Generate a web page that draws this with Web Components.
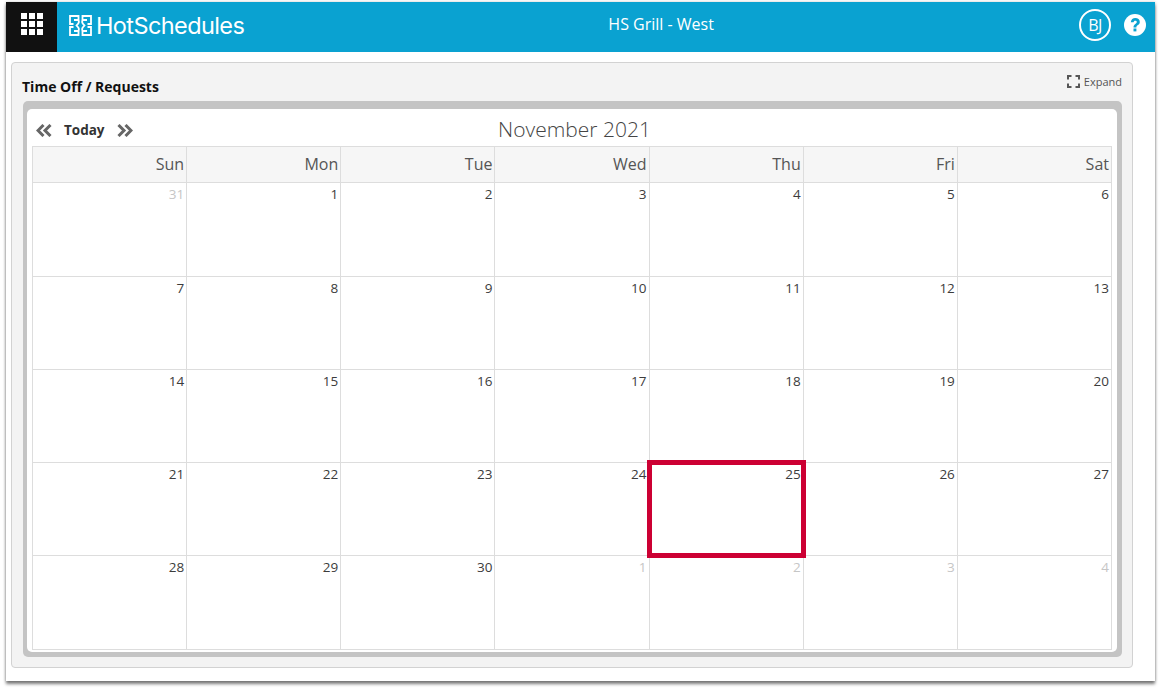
<!DOCTYPE html>
<html>
<head>
<meta charset="utf-8">
<style>
html, body { margin: 0; height: 100%; background: #fff; font-family: "Open Sans", sans-serif; }
body { padding: 2px 6px 10px 6px; box-sizing: border-box; height: 691px; overflow: hidden; }
</style>
</head>
<body>
<hs-app>
  <hs-header slot="header" location="HS Grill - West" initials="BJ"></hs-header>
  <hs-panel title="Time Off / Requests">
    <hs-calendar month="November 2021"></hs-calendar>
  </hs-panel>
</hs-app>

<script>
class HsApp extends HTMLElement {
  constructor() {
    super();
    this.attachShadow({mode: 'open'}).innerHTML = `
      <style>
      :host { display: flex; flex-direction: column; width: 1149px; height: 679px; background: #fff;
        box-shadow: 0 3px 3px 0 rgba(0,0,0,.5), 0 0 3px rgba(0,0,0,.2); }
      .content { flex: 1; padding: 10px 22px 13px 5px; display: flex; min-height: 0; }
      </style>
      <slot name="header"></slot>
      <div class="content"><slot></slot></div>`;
  }
}

class HsHeader extends HTMLElement {
  constructor() {
    super();
    this.attachShadow({mode: 'open'}).innerHTML = `
      <style>
      :host { display: flex; align-items: center; height: 50px; padding-bottom: 4px; box-sizing: border-box; background: #0aa2d1; color: #fff; }
      .apps { align-self: flex-start; width: 51px; height: 50px; padding-bottom: 6px; box-sizing: border-box; background: #111; display: grid; grid-template-columns: repeat(3, 6px);
        grid-auto-rows: 6px; gap: 2px; place-content: center; }
      .apps i { background: #fff; }
      .logo { display: flex; align-items: center; gap: 4px; margin-left: 12px; font: 400 23.5px Inter, "Open Sans", sans-serif; letter-spacing: -.6px; }
      .location { flex: 1; text-align: center; font-size: 16px; margin: 0 12px 2px 11px; }
      .user { width: 32px; height: 32px; border: 2px solid #fff; border-radius: 50%; box-sizing: border-box;
        display: flex; align-items: center; justify-content: center; font-size: 16px; letter-spacing: -.5px; }
      .help { margin: 0 9px 0 13px; width: 22px; height: 22px; display: block; }
      </style>
      <div class="apps"><i></i><i></i><i></i><i></i><i></i><i></i><i></i><i></i><i></i></div>
      <div class="logo">
        <svg width="23" height="21" viewBox="0 0 23 21" fill="none" stroke="#fff" stroke-width="1.800">
          <path d="M9.500 5.500V1H1V9H4.500M13.500 5.500V1H22V9H18.500M9.500 15.500V20H1V12H4.500M13.500 15.500V20H22V12H18.500"/>
          <path d="M5 5H8.500C10 5 10.500 7.500 9 8.800L7.500 10.500L9 12.200C10.500 13.500 10 16 8.500 16H5M18 5H14.500C13 5 12.500 7.500 14 8.800L15.500 10.500L14 12.200C12.500 13.500 13 16 14.500 16H18"/>
        </svg>
        <span>HotSchedules</span>
      </div>
      <div class="location">${this.getAttribute('location')}</div>
      <div class="user">${this.getAttribute('initials')}</div>
      <svg class="help" viewBox="0 0 22 22">
        <circle cx="11" cy="11" r="11" fill="#fff"/>
        <path d="M6.800 8.300C7 5.500 8.900 4 11.300 4C13.900 4 15.800 5.600 15.800 7.900C15.800 9.600 14.800 10.500 13.600 11.300C12.600 12 12.400 12.300 12.400 13.400H9.500C9.500 11.600 10.100 10.800 11.300 9.900C12.200 9.300 12.800 8.900 12.800 8.100C12.800 7.300 12.200 6.800 11.200 6.800C10.200 6.800 9.700 7.400 9.600 8.300Z" fill="#0aa2d1"/>
        <rect x="9.500" y="14.500" width="2.900" height="2.900" fill="#0aa2d1"/>
      </svg>`;
  }
}

class HsPanel extends HTMLElement {
  constructor() {
    super();
    this.attachShadow({mode: 'open'}).innerHTML = `
      <style>
      :host { display: flex; flex-direction: column; flex: 1; min-width: 0; box-sizing: border-box; background: #f3f3f3;
        border: 1px solid #d2d2d2; border-radius: 4px; padding: 0 10px 10px 11px; }
      .head { display: flex; justify-content: space-between; height: 38px; }
      h2 { margin: 14px 0 0 -1px; font-size: 14px; font-weight: 700; color: #111; line-height: 19px; }
      .expand { display: flex; align-items: center; gap: 4px; height: 14px; margin-top: 11px; font-size: 11px; color: #555; }
      .expand svg { display: block; }
      .well { flex: 1; display: flex; min-height: 0; background: #c4c4c4; border-radius: 5px; padding: 8px 5px 5px 4px; }
      </style>
      <div class="head">
        <h2>${this.getAttribute('title')}</h2>
        <div class="expand">
          <svg width="13" height="13" viewBox="0 0 13 13" fill="none" stroke="#555" stroke-width="2">
            <path d="M1 4.500V1H4.500M8.500 1H12V4.500M1 8.500V12H4.500M8.500 12H12V8.500"/>
          </svg>
          <span>Expand</span>
        </div>
      </div>
      <div class="well"><slot></slot></div>`;
  }
}

class HsCalendar extends HTMLElement {
  constructor() {
    super();
    const days = ['Sun', 'Mon', 'Tue', 'Wed', 'Thu', 'Fri', 'Sat'];
    const cells = [31, ...Array.from({length: 30}, (_, i) => i + 1), 1, 2, 3, 4];
    const head = days.map(d => `<div class="dow">${d}</div>`).join('');
    const body = cells.map((n, i) => {
      const muted = i === 0 || i > 30 ? ' muted' : '';
      const mark = n === 25 ? '<div class="mark"></div>' : '';
      return `<div class="day${muted}">${n}${mark}</div>`;
    }).join('');
    this.attachShadow({mode: 'open'}).innerHTML = `
      <style>
      :host { display: flex; flex-direction: column; flex: 1; min-width: 0; background: #fff; border-radius: 5px; padding: 0 5px 2px 5px; }
      .bar { position: relative; display: flex; align-items: center; height: 38px; box-sizing: border-box; padding-top: 4px; flex: none; color: #333; margin-bottom: -1px; }
      .nav { display: flex; align-items: center; gap: 12px; margin-left: 4px; font-size: 13.500px; font-weight: 700; }
      .nav svg { display: block; }
      .title { position: absolute; left: 5px; right: 0; top: 6px; text-align: center; font-size: 21px; font-weight: 300; color: #444; line-height: 28px; }
      .grid { flex: 1; display: grid; grid-template-columns: repeat(7, 1fr); grid-template-rows: 36px 94px 93px 93px 93px 1fr;
        border-top: 1px solid #ddd; border-left: 1px solid #ddd; min-height: 0; }
      .dow, .day { border: solid #ddd; border-width: 0 1px 1px 0; }
      .dow { background: #f6f6f6; text-align: right; font-size: 16px; color: #555; padding: 6px 2px 0 0; line-height: 22px; }
      .day { position: relative; text-align: right; font-size: 13.500px; color: #3c3c3c; padding: 2px 2px 0 0; line-height: 19px; }
      .muted { color: #c6c6c6; }
      .mark { position: absolute; z-index: 1; inset: -3px; border: 5px solid #cc0033; }
      </style>
      <div class="bar">
        <div class="nav">
          <svg width="16" height="13" viewBox="0 0 16 13" fill="none" stroke="#666" stroke-width="3"><path d="M7.500 1L2 6.500L7.500 12M14.500 1L9 6.500L14.500 12"/></svg>
          <span>Today</span>
          <svg width="16" height="13" viewBox="0 0 16 13" fill="none" stroke="#666" stroke-width="3"><path d="M1.500 1L7 6.500L1.500 12M8.500 1L14 6.500L8.500 12"/></svg>
        </div>
        <div class="title">${this.getAttribute('month')}</div>
      </div>
      <div class="grid">${head}${body}</div>`;
  }
}

customElements.define('hs-app', HsApp);
customElements.define('hs-header', HsHeader);
customElements.define('hs-panel', HsPanel);
customElements.define('hs-calendar', HsCalendar);
</script>
</body>
</html>
